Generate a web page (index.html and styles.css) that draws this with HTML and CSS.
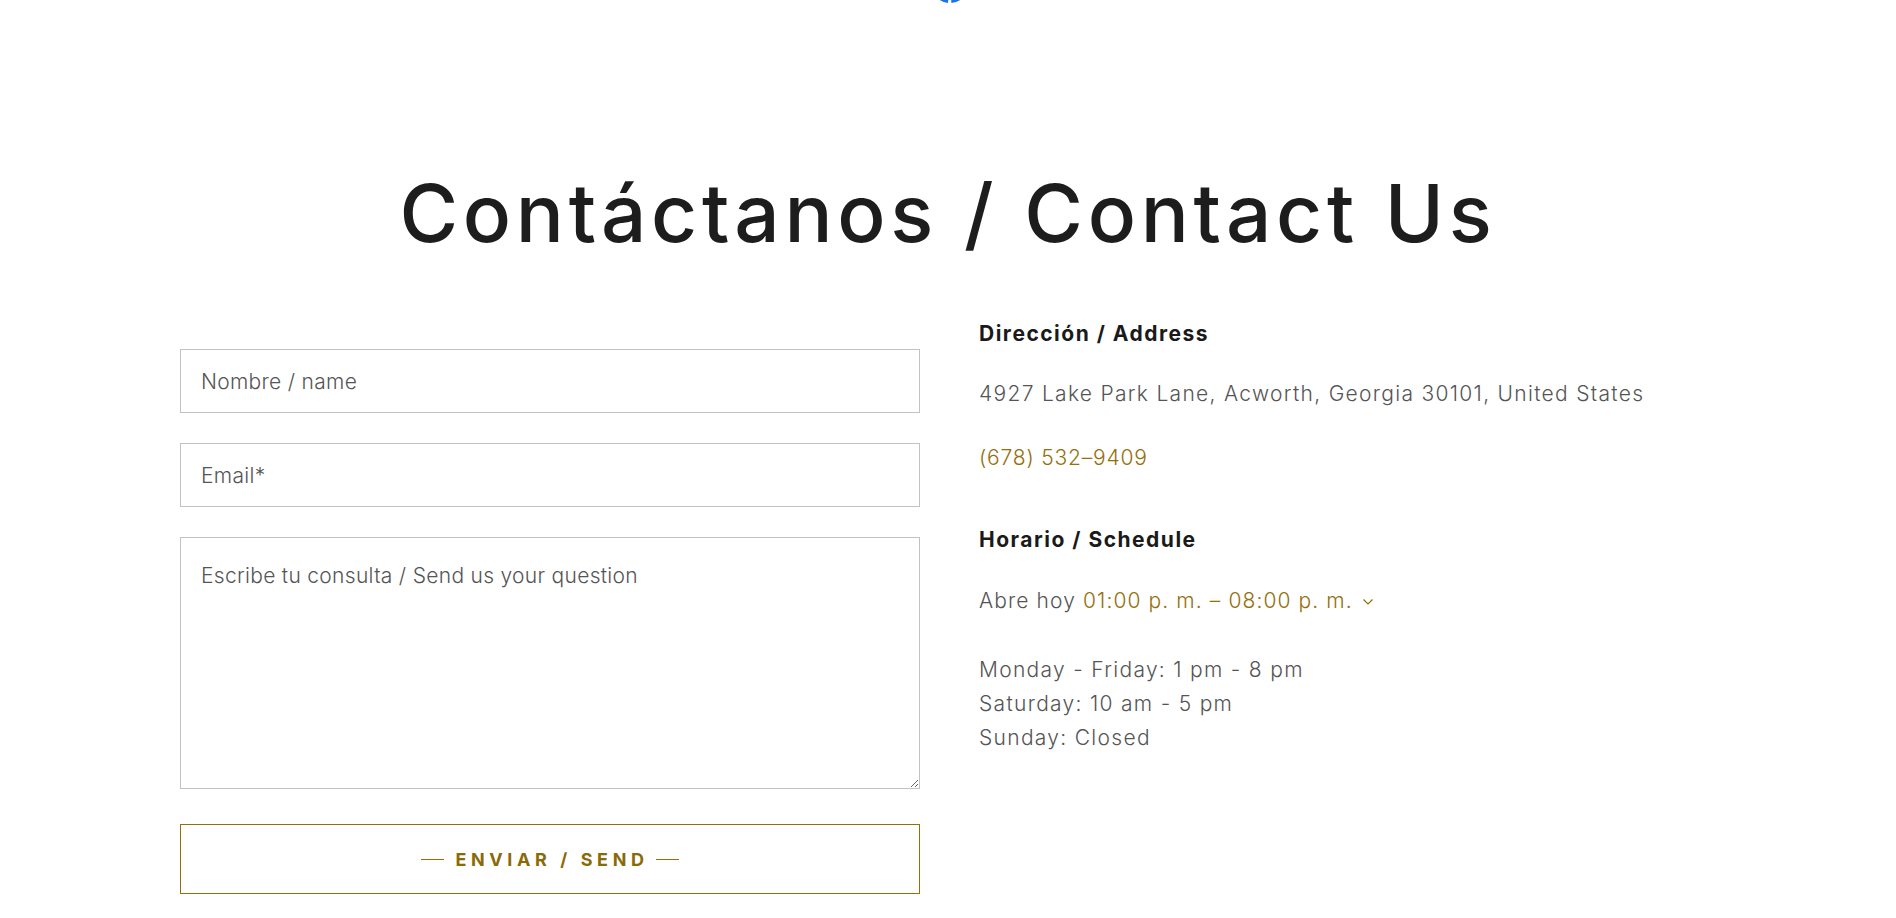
FILE: index.html
```html
<!DOCTYPE html>
<html lang="es">
<head>
<meta charset="utf-8">
<title>Contáctanos / Contact Us</title>
<link rel="stylesheet" href="styles.css">
</head>
<body>
<div class="spinner" aria-hidden="true">
  <svg width="42" height="42" viewBox="0 0 42 42"><circle cx="21" cy="21" r="17" fill="none" stroke="#1a73e8" stroke-width="4" stroke-dasharray="25.2 3.2 78.4 0"/></svg>
</div>
<main class="contact">
  <h1 class="title">Contáctanos / Contact Us</h1>
  <div class="grid">
    <form class="form">
      <input class="field" type="text" placeholder="Nombre / name">
      <input class="field" type="email" placeholder="Email*">
      <textarea class="field area" placeholder="Escribe tu consulta / Send us your question"></textarea>
      <button class="send" type="button">ENVIAR / SEND</button>
    </form>
    <section class="info">
      <h3 class="label">Dirección / Address</h3>
      <p class="text addr">4927 Lake Park Lane, Acworth, Georgia 30101, United States</p>
      <p class="text phone">(678) 532–9409</p>
      <h3 class="label sched">Horario / Schedule</h3>
      <p class="text today">Abre hoy <span class="gold">01:00 p. m. – 08:00 p. m.</span><svg class="chev" width="12" height="8" viewBox="0 0 12 8"><path d="M1.5 1.5 L6 6 L10.5 1.5" fill="none" stroke="#94700c" stroke-width="1.2"/></svg></p>
      <p class="text hours">Monday - Friday: 1 pm - 8 pm<br>Saturday: 10 am - 5 pm<br>Sunday: Closed</p>
    </section>
  </div>
</main>
</body>
</html>
```

FILE: styles.css
```css
* { box-sizing: border-box; }
html, body { margin: 0; padding: 0; background: #fff; }
body {
  font-family: Inter, "Liberation Sans", sans-serif;
  color: #555;
  height: 918px;
  overflow: hidden;
  position: relative;
}
.spinner {
  position: absolute;
  left: 929px;
  top: -37px;
  width: 42px;
  height: 42px;
}
.contact {
  width: 1536px;
  margin: 0 auto;
  padding-top: 165px;
}
.title {
  margin: 0;
  text-align: center;
  font-size: 80px;
  line-height: 96px;
  font-weight: 500;
  color: #1d1d1d;
  letter-spacing: 4.7px;
}
.grid {
  display: grid;
  grid-template-columns: 740px 1fr;
  column-gap: 59px;
  margin-top: 56px;
}
.form {
  display: flex;
  flex-direction: column;
  gap: 30px;
  padding-top: 32px;
}
.field {
  display: block;
  width: 100%;
  height: 64px;
  margin: 0;
  padding: 0 20px;
  border: 1px solid #c2c2c2;
  border-radius: 0;
  background: #fff;
  font-family: Inter, "Liberation Sans", sans-serif;
  font-size: 21px;
  font-weight: 300;
  letter-spacing: 0.3px;
  color: #555;
  outline: none;
}
.field::placeholder { color: #555; opacity: 1; }
.area {
  height: 252px;
  padding: 22px 20px;
  line-height: 1.5;
  resize: vertical;
}
.send {
  margin-top: 5px;
  height: 70px;
  width: 100%;
  border: 1px solid #94700c;
  background: #fff;
  color: #8a6a07;
  font-family: Inter, "Liberation Sans", sans-serif;
  font-size: 18px;
  font-weight: 700;
  letter-spacing: 4.6px;
  display: flex;
  align-items: center;
  justify-content: center;
  cursor: pointer;
}
.send::before, .send::after {
  content: "";
  width: 23px;
  height: 1px;
  background: #94700c;
}
.send::before { margin-right: 11px; }
.send::after { margin-left: 7px; }
.info { padding-top: 0; }
.label {
  margin: 0;
  font-size: 21px;
  line-height: 34px;
  font-weight: 700;
  color: #1a1a1a;
  letter-spacing: 1.5px;
}
.text {
  margin: 0;
  font-size: 21px;
  line-height: 34px;
  font-weight: 300;
  color: #555;
  letter-spacing: 1.3px;
}
.addr { margin-top: 26px; }
.phone { margin-top: 30px; color: #94700c; letter-spacing: 0.8px; }
.sched { margin-top: 48px; }
.today { margin-top: 27px; display: flex; align-items: center; white-space: pre; letter-spacing: 1.1px; }
.gold { color: #94700c; }
.chev { margin-left: 9px; margin-top: 2px; }
.hours { margin-top: 35px; }
```
